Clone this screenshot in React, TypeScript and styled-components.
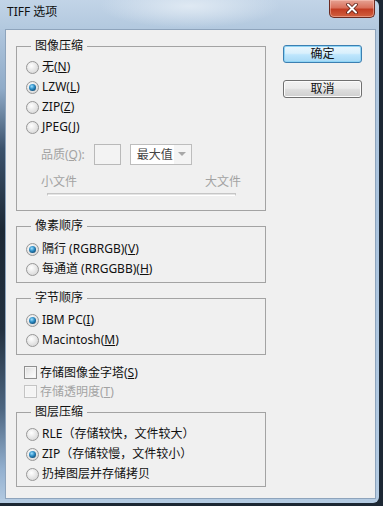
import React from 'react';
import styled, { createGlobalStyle } from 'styled-components';

const UI_FONT = `"Noto Sans", "Noto Sans CJK SC", sans-serif`;

const GlobalStyle = createGlobalStyle`
  html, body {
    margin: 0;
    padding: 0;
    width: 383px;
    height: 506px;
    overflow: hidden;
    background: #1d2834;
  }
  body {
    font-family: ${UI_FONT};
    font-size: 12px;
  }
`;

const Window = styled.div`
  width: 379px;
  height: 503px;
  display: flex;
  flex-direction: column;
  background:
    radial-gradient(ellipse 90px 22px at 190px 6px, #dfe9f3 0, rgba(223, 233, 243, 0) 100%),
    linear-gradient(180deg, #c2d4e7 0, #b3c9df 28px, #aac3dd 200px, #b4cbe2 503px);
  border-radius: 0 6px 6px 0;
`;

const TitleBar = styled.div`
  height: 29px;
  display: flex;
  align-items: flex-start;
  flex-shrink: 0;
`;

const Caption = styled.div`
  padding: 4px 0 0 7px;
  font-size: 12px;
  line-height: 16px;
  color: #101010;
`;

const CloseButton = styled.div`
  margin-left: auto;
  margin-right: 4px;
  width: 46px;
  height: 18px;
  box-sizing: border-box;
  border: 1px solid #6b2a20;
  border-top: none;
  border-radius: 0 0 5px 5px;
  background: linear-gradient(180deg, #e6a293 0%, #d9715c 45%, #c23d23 55%, #d1603f 100%);
  box-shadow: inset 0 0 0 1px rgba(255, 210, 200, 0.45);
  display: flex;
  align-items: center;
  justify-content: center;
`;

const FrameBody = styled.div`
  flex: 1;
  display: flex;
  padding: 0 3px 4px 0;
  min-height: 0;
`;

/* glass edge on the left shows the dark desktop behind the window */
const LeftEdge = styled.div`
  width: 5px;
  flex-shrink: 0;
  background: linear-gradient(180deg, #b1c7de 0, #8fabc8 60px, #3b526c 120px, #1c2835 200px, #22303f 300px, #4d6681 380px, #93b0cf 440px, #b4cbe2 474px);
`;

const Client = styled.div`
  flex: 1;
  display: flex;
  box-sizing: border-box;
  border: 1px solid #8ea4bc;
  background: #f0f0f0;
  padding: 8px 0 0 10px;
`;

const LeftColumn = styled.div`
  width: 250px;
  display: flex;
  flex-direction: column;
`;

const RightColumn = styled.div`
  margin-left: 17px;
  padding-top: 7px;
  display: flex;
  flex-direction: column;
  gap: 17px;
`;

const Group = styled.fieldset<{ $gap?: number; $padTop: number; $padBottom: number }>`
  margin: ${(p) => p.$gap ?? 0}px 0 0 0;
  padding: ${(p) => p.$padTop}px 0 ${(p) => p.$padBottom}px 0;
  border: 1px solid #a3a3a3;
  min-width: 0;
`;

const Legend = styled.legend`
  margin-left: 14px;
  padding: 0 4px;
  font-size: 12px;
  line-height: 16px;
  color: #111;
`;

const OptionRow = styled.div<{ $h?: number; $indent?: number; $disabled?: boolean }>`
  height: ${(p) => p.$h ?? 20}px;
  display: flex;
  align-items: center;
  gap: 3px;
  padding-left: ${(p) => p.$indent ?? 9}px;
  color: ${(p) => (p.$disabled ? '#a3a3a3' : '#111')};
  line-height: 16px;
  white-space: nowrap;
`;

const RadioDot = styled.span<{ $on?: boolean }>`
  width: 13px;
  height: 13px;
  box-sizing: border-box;
  border-radius: 50%;
  border: 1px solid #979797;
  background: radial-gradient(circle at 40% 35%, #ffffff 0, #e9e9e9 45%, #cfcfcf 100%);
  display: flex;
  align-items: center;
  justify-content: center;
  flex-shrink: 0;

  &::after {
    content: '';
    display: ${(p) => (p.$on ? 'block' : 'none')};
    width: 7px;
    height: 7px;
    border-radius: 50%;
    background: radial-gradient(circle at 40% 35%, #9fe0ff 0, #2f8fc7 40%, #0d4a75 80%, #0a3655 100%);
  }
`;

const CheckBox = styled.span<{ $disabled?: boolean }>`
  width: 13px;
  height: 13px;
  box-sizing: border-box;
  border: 1px solid ${(p) => (p.$disabled ? '#c4c4c4' : '#8f8f8f')};
  background: ${(p) =>
    p.$disabled ? '#f4f4f4' : 'linear-gradient(135deg, #dcdcdc 0%, #f3f3f3 60%, #ffffff 100%)'};
  box-shadow: inset 0 0 0 1px ${(p) => (p.$disabled ? '#f7f7f7' : '#f4f4f4')};
  flex-shrink: 0;
`;

const QualityRow = styled.div`
  margin-top: 6px;
  height: 22px;
  display: flex;
  align-items: center;
  padding-left: 24px;
  color: #a3a3a3;
`;

const QualityInput = styled.div`
  margin-left: 9px;
  width: 27px;
  height: 21px;
  box-sizing: border-box;
  border: 1px solid #b9b9b9;
  background: #f3f3f3;
`;

const Dropdown = styled.div`
  margin-left: 9px;
  width: 62px;
  height: 21px;
  box-sizing: border-box;
  border: 1px solid #bdbdbd;
  background: #f4f4f4;
  display: flex;
`;

const DropdownValue = styled.div`
  width: 43px;
  background: #ffffff;
  color: #444;
  padding-left: 6px;
  box-sizing: border-box;
  line-height: 19px;
`;

const DropdownArrow = styled.div`
  flex: 1;
  display: flex;
  align-items: center;
  justify-content: center;

  &::after {
    content: '';
    border-left: 4px solid transparent;
    border-right: 4px solid transparent;
    border-top: 4px solid #a8a8a8;
  }
`;

const SizeLabels = styled.div`
  margin-top: 9px;
  height: 15px;
  line-height: 15px;
  padding: 0 24px;
  display: flex;
  justify-content: space-between;
  color: #a3a3a3;
`;

const SliderTrack = styled.div`
  margin: 4px 29px 0 30px;
  height: 3px;
  box-sizing: border-box;
  border: 1px solid #c6c6c6;
  border-bottom-color: #ffffff;
  background: #e4e4e4;
`;

const CheckList = styled.div`
  margin-top: 8px;
  display: flex;
  flex-direction: column;
`;

const DialogButton = styled.div<{ $primary?: boolean }>`
  width: 79px;
  height: 18px;
  box-sizing: border-box;
  border-radius: 3px;
  border: 1px solid ${(p) => (p.$primary ? '#3c7fb1' : '#707070')};
  background: ${(p) =>
    p.$primary
      ? 'linear-gradient(180deg, #eaf6fd 0%, #d9f0fc 45%, #bee6fd 55%, #a7d9f5 100%)'
      : 'linear-gradient(180deg, #f2f2f2 0%, #ebebeb 45%, #dddddd 55%, #cfcfcf 100%)'};
  box-shadow: inset 0 0 0 1px ${(p) => (p.$primary ? '#8fd4f5' : '#fcfcfc')};
  display: flex;
  align-items: center;
  justify-content: center;
  font-size: 12px;
  line-height: 14px;
  color: #111;
`;

type RadioProps = { on?: boolean; children: React.ReactNode };

const Radio = ({ on, children }: RadioProps) => (
  <OptionRow>
    <RadioDot $on={on} />
    <span>{children}</span>
  </OptionRow>
);

const CloseGlyph = () => (
  <svg width="14" height="11" viewBox="0 0 14 11">
    <path d="M3 1.5 L11 9.5 M11 1.5 L3 9.5" stroke="#5a1e14" strokeWidth="3.6" strokeLinecap="round" />
    <path d="M3 1.5 L11 9.5 M11 1.5 L3 9.5" stroke="#ffffff" strokeWidth="2" strokeLinecap="round" />
  </svg>
);

const App: React.FC = () => {
  return (
    <>
      <GlobalStyle />
      <Window>
        <TitleBar>
          <Caption>TIFF 选项</Caption>
          <CloseButton>
            <CloseGlyph />
          </CloseButton>
        </TitleBar>

        <FrameBody>
          <LeftEdge />
          <Client>
            <LeftColumn>
              <Group $padTop={3} $padBottom={14}>
                <Legend>图像压缩</Legend>
                <Radio>
                  无(<u>N</u>)
                </Radio>
                <Radio on>
                  LZW(<u>L</u>)
                </Radio>
                <Radio>
                  ZIP(<u>Z</u>)
                </Radio>
                <Radio>
                  JPEG(<u>J</u>)
                </Radio>
                <QualityRow>
                  <span>
                    品质(<u>Q</u>):
                  </span>
                  <QualityInput />
                  <Dropdown>
                    <DropdownValue>最大值</DropdownValue>
                    <DropdownArrow />
                  </Dropdown>
                </QualityRow>
                <SizeLabels>
                  <span>小文件</span>
                  <span>大文件</span>
                </SizeLabels>
                <SliderTrack />
              </Group>

              <Group $gap={7} $padTop={5} $padBottom={3}>
                <Legend>像素顺序</Legend>
                <Radio on>
                  隔行 (RGBRGB)(<u>V</u>)
                </Radio>
                <Radio>
                  每通道 (RRGGBB)(<u>H</u>)
                </Radio>
              </Group>

              <Group $gap={7} $padTop={4} $padBottom={4}>
                <Legend>字节顺序</Legend>
                <Radio on>
                  IBM PC(<u>I</u>)
                </Radio>
                <Radio>
                  Macintosh(<u>M</u>)
                </Radio>
              </Group>

              <CheckList>
                <OptionRow $h={19} $indent={8}>
                  <CheckBox />
                  <span>
                    存储图像金字塔(<u>S</u>)
                  </span>
                </OptionRow>
                <OptionRow $h={19} $indent={8} $disabled>
                  <CheckBox $disabled />
                  <span>
                    存储透明度(<u>T</u>)
                  </span>
                </OptionRow>
              </CheckList>

              <Group $gap={3} $padTop={4} $padBottom={2}>
                <Legend>图层压缩</Legend>
                <Radio>RLE（存储较快，文件较大）</Radio>
                <Radio on>ZIP（存储较慢，文件较小）</Radio>
                <Radio>扔掉图层并存储拷贝</Radio>
              </Group>
            </LeftColumn>

            <RightColumn>
              <DialogButton $primary>确定</DialogButton>
              <DialogButton>取消</DialogButton>
            </RightColumn>
          </Client>
        </FrameBody>
      </Window>
    </>
  );
};

export default App;
